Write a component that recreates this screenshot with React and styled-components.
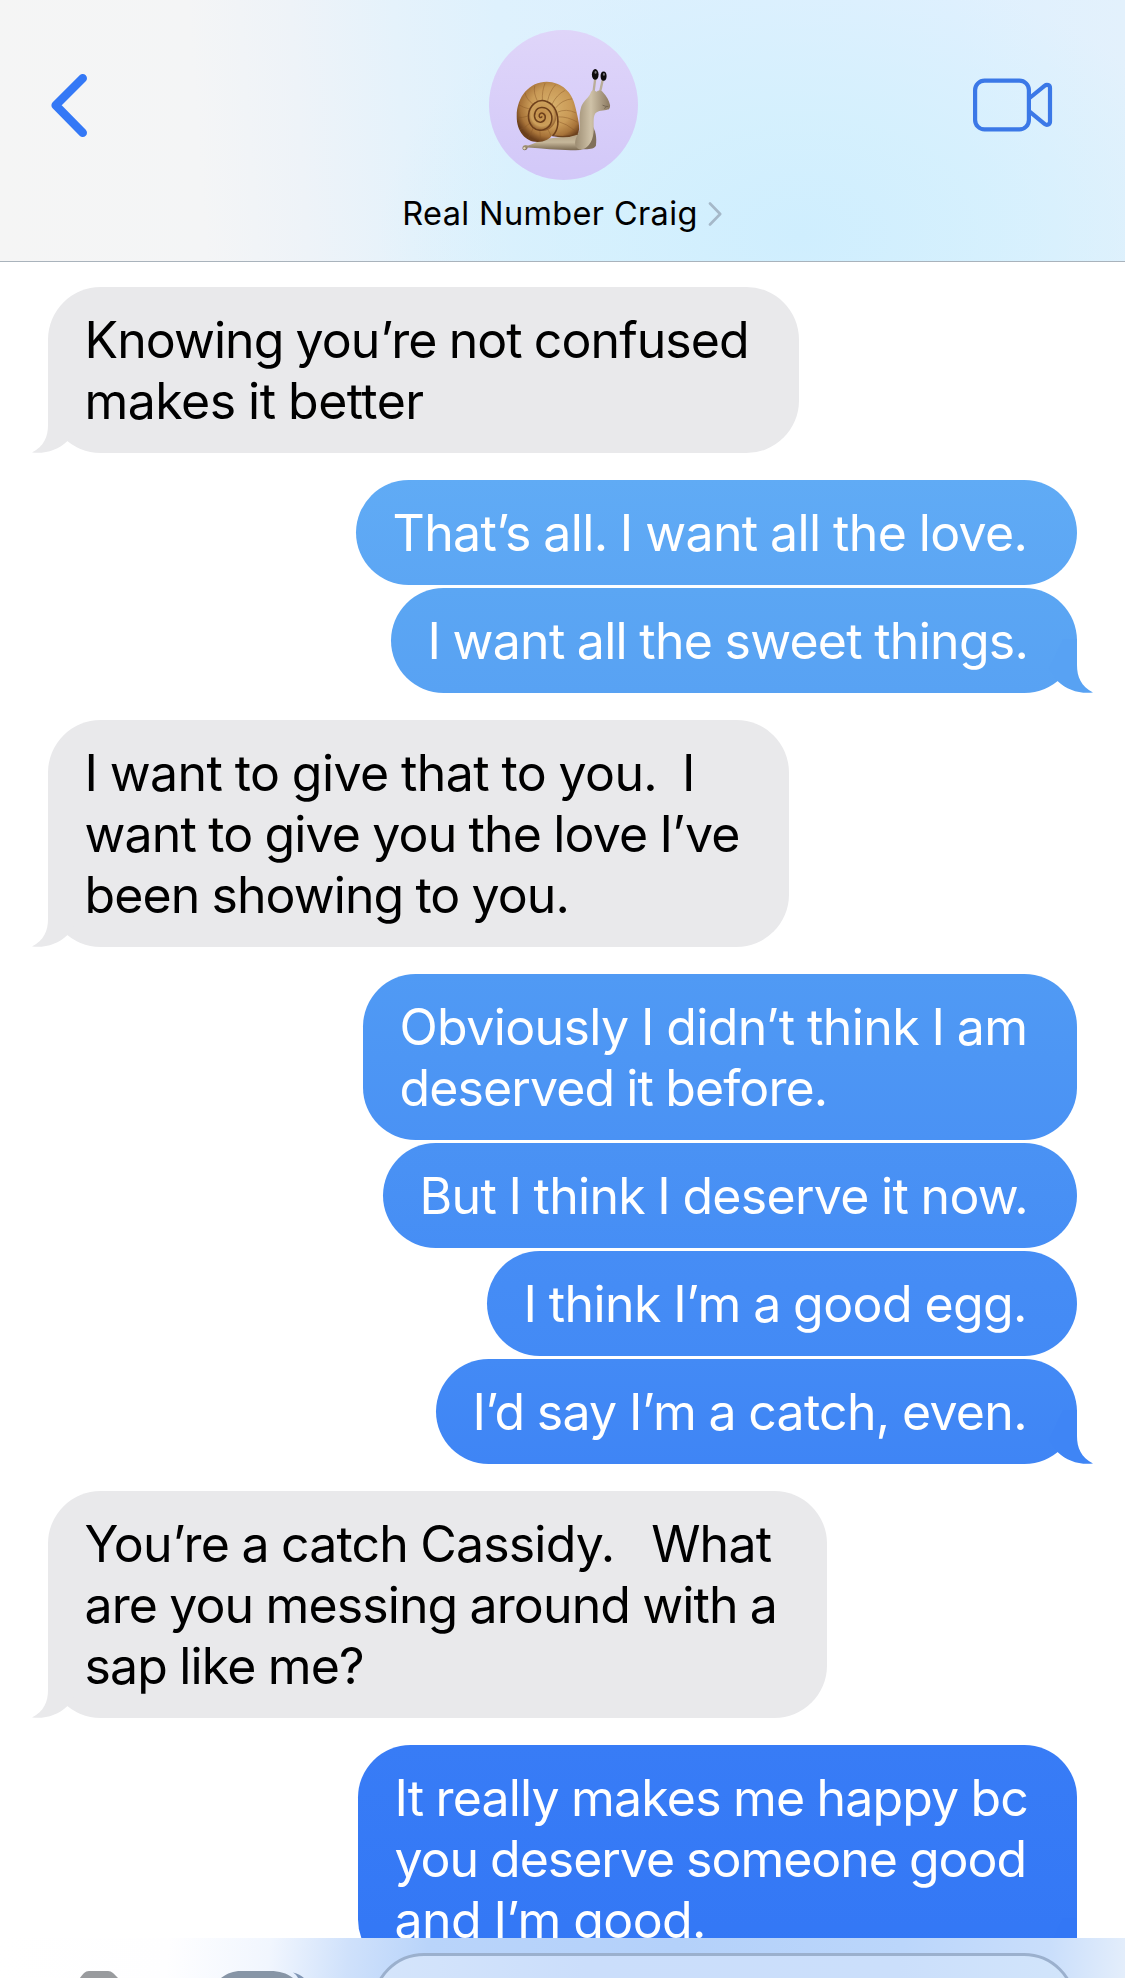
import React from "react";
import styled, { createGlobalStyle } from "styled-components";

// each line is [text, letter spacing in px]
const messages = [
	{
		side: "in",
		width: 751,
		lines: [["Knowing you’re not confused", -0.93], ["makes it better", -0.53]],
		last: true,
	},
	{
		side: "out",
		width: 721,
		lines: [["That’s all. I want all the love.", -0.61]],
		from: "#60abf5",
		to: "#5ca6f4",
	},
	{
		side: "out",
		width: 686,
		lines: [["I want all the sweet things.", -0.73]],
		from: "#5ba6f3",
		to: "#58a2f3",
		last: true,
	},
	{
		side: "in",
		width: 741,
		lines: [
			["I want to give that to you.  I", -0.6],
			["want to give you the love I’ve", -0.86],
			["been showing to you.", -0.92],
		],
		last: true,
	},
	{
		side: "out",
		width: 714,
		lines: [["Obviously I didn’t think I am", -0.61], ["deserved it before.", -0.89]],
		from: "#509af4",
		to: "#4a92f4",
	},
	{
		side: "out",
		width: 694,
		lines: [["But I think I deserve it now.", -0.7]],
		from: "#4a92f4",
		to: "#468ef5",
	},
	{
		side: "out",
		width: 590,
		lines: [["I think I’m a good egg.", -0.6]],
		from: "#468df5",
		to: "#438af5",
	},
	{
		side: "out",
		width: 641,
		lines: [["I’d say I’m a catch, even.", -0.69]],
		from: "#438af5",
		to: "#3f85f5",
		last: true,
	},
	{
		side: "in",
		width: 779,
		lines: [
			["You’re a catch Cassidy.   What", -0.81],
			["are you messing around with a", -0.88],
			["sap like me?", -0.85],
		],
		last: true,
	},
	{
		side: "out",
		width: 719,
		lines: [
			["It really makes me happy bc", -0.83],
			["you deserve someone good", -1.03],
			["and I’m good.", -0.6],
		],
		from: "#387cf6",
		to: "#3377f5",
		last: true,
	},
];

function Snail() {
	return (
		<svg width="150" height="150" viewBox="26 30 449 449">
			<defs>
				<radialGradient id="shell" cx="0.55" cy="0.42" r="0.6">
					<stop offset="0" stopColor="#d9b26e" />
					<stop offset="0.55" stopColor="#c99a57" />
					<stop offset="0.82" stopColor="#a8743a" />
					<stop offset="1" stopColor="#6b3f1c" />
				</radialGradient>
				<radialGradient id="coil" cx="0.5" cy="0.45" r="0.55">
					<stop offset="0" stopColor="#c08c48" />
					<stop offset="0.7" stopColor="#cc9f5b" />
					<stop offset="1" stopColor="#8e5a2a" />
				</radialGradient>
				<linearGradient id="neck" x1="0" y1="0" x2="1" y2="0">
					<stop offset="0" stopColor="#9c8c72" />
					<stop offset="0.45" stopColor="#cfc2a8" />
					<stop offset="1" stopColor="#8a785f" />
				</linearGradient>
				<linearGradient id="foot" x1="0" y1="0" x2="0" y2="1">
					<stop offset="0" stopColor="#a89779" />
					<stop offset="0.6" stopColor="#c6b79a" />
					<stop offset="1" stopColor="#796850" />
				</linearGradient>
			</defs>

			{/* eye stalks */}
			<path d="M338 222 L345 168 M357 222 L368 172" stroke="#b9ad99" strokeWidth="7" fill="none" />
			<ellipse cx="344" cy="163" rx="10" ry="16" fill="#0d0b0d" />
			<ellipse cx="369" cy="168" rx="9" ry="14" fill="#0d0b0d" />
			<ellipse cx="345" cy="157" rx="3" ry="4" fill="#77757a" />
			<ellipse cx="370" cy="163" rx="3" ry="4" fill="#77757a" />

			{/* foot and neck */}
			<path
				d="M331 310 C346 330 349 352 346 376 C343 386 325 388 305 387 L290 370 Z"
				fill="#80705b"
			/>
			<path
				d="M126 384 C126 374 136 373 143 376 C158 372 172 364 184 358 L280 345 L302 330 L330 345 C326 370 315 386 299 389 C250 392 195 386 142 382 C141 391 127 393 126 384 Z"
				fill="url(#foot)"
			/>
			<path
				d="M294 340 C302 318 292 292 302 260 C308 242 326 232 331 216 C336 207 342 211 348 215 C353 210 361 210 367 216 C378 228 386 242 388 254 C390 260 386 270 381 268 C370 272 352 270 344 280 C336 292 341 317 339 337 C336 370 317 389 297 388 C280 382 280 360 294 340 Z"
				fill="url(#neck)"
			/>
			<path d="M366 255 Q376 260 383 259 M371 265 L377 261" stroke="#6f604e" strokeWidth="2.5" fill="none" />
			<circle cx="132" cy="384" r="3.5" fill="#e1d5bd" />

			{/* shell */}
			<path
				d="M216 344 C240 350 270 353 292 340 C301 326 292 292 285 263 C276 215 243 186 199 185 C148 185 109 229 109 288 C108 334 137 366 172 365 C192 364 207 357 216 344 Z"
				fill="url(#shell)"
			/>
			<g stroke="#875625" strokeWidth="2" opacity="0.65" fill="none">
				<path d="M231 303 Q257 310 285 332" />
				<path d="M233 290 Q262 289 291 306" />
				<path d="M231 276 Q257 264 286 278" />
				<path d="M226 263 Q244 239 275 236" />
				<path d="M215 252 Q228 224 253 211" />
				<path d="M201 244 Q207 213 226 193" />
				<path d="M186 241 Q184 212 194 189" />
				<path d="M171 243 Q158 216 163 197" />
				<path d="M158 252 Q137 237 134 218" />
				<path d="M149 267 Q127 262 116 254" />
				<path d="M145 287 Q125 294 111 292" />
				<path d="M149 308 Q134 323 119 328" />
				<path d="M159 322 Q151 342 144 352" />
				<path d="M178 329 Q180 347 179 362" />
				<path d="M199 324 Q209 337 211 346" />
			</g>
			<ellipse cx="185" cy="286" rx="43" ry="46" fill="url(#coil)" />
			<path
				d="M217 346 C234 330 237 298 226 271 C215 245 185 232 163 249 C140 267 138 302 157 321 C176 339 207 328 213 304 C219 279 202 261 183 262 C165 263 158 284 165 298 C173 310 190 308 194 295 C197 281 183 274 177 283 C174 290 180 295 184 290"
				fill="none"
				stroke="#6d3f1b"
				strokeWidth="4.5"
				strokeLinecap="round"
			/>
			<path d="M217 346 Q258 354 292 341" fill="none" stroke="#6d431f" strokeWidth="4" />
		</svg>
	);
}

function Tail({ side, color }) {
	return (
		<TailShape $side={side} viewBox="0 0 44 54">
			<path
				d="M16 0 V26 C16 38 12 47 0 53.6 C14 55 26 51 35.5 42 L44 30 L30 0 Z"
				fill={color}
			/>
		</TailShape>
	);
}

function Message({ side, width, lines, from, to, last }) {
	return (
		<Bubble $side={side} $width={width} $from={from} $to={to} $last={last}>
			{last && <Tail side={side} color={side === "in" ? "#e9e9eb" : to} />}
			{lines.map(([text, tracking]) => (
				<Line key={text} $tracking={tracking}>
					{text}
				</Line>
			))}
		</Bubble>
	);
}

function App() {
	return (
		<Screen>
			<GlobalStyle />

			<Header>
				<BackButton aria-label="Back">
					<svg width="40" height="66" viewBox="0 0 40 66">
						<path
							d="M34.7 6.3 L7.7 33.3 L34.7 60.7"
							fill="none"
							stroke="#3478f6"
							strokeWidth="8.6"
							strokeLinecap="round"
							strokeLinejoin="round"
						/>
					</svg>
				</BackButton>

				<Contact>
					<Avatar>
						<Snail />
					</Avatar>
					<ContactName>
						<span>Real Number Craig</span>
						<svg width="14" height="26" viewBox="0 0 14 26">
							<path
								d="M2 2.5 L12.2 13 L2 23.5"
								fill="none"
								stroke="#a5b8c8"
								strokeWidth="2.6"
								strokeLinecap="round"
								strokeLinejoin="round"
							/>
						</svg>
					</ContactName>
				</Contact>

				<VideoButton aria-label="Video call">
					<svg width="80" height="54" viewBox="0 0 80 54">
						<g fill="none" stroke="#3b78e7" strokeWidth="4.2" strokeLinejoin="round">
							<rect x="2.1" y="2.6" width="53.8" height="48.8" rx="9.5" />
							<path d="M56 20.5 L71.5 7.8 C74 5.9 77 7 77 10 V43.5 C77 46.5 74 47.8 71.5 45.8 L56 33.2" />
						</g>
					</svg>
				</VideoButton>
			</Header>

			<Thread>
				{messages.map((message) => (
					<Message key={message.lines[0][0]} {...message} />
				))}
			</Thread>

			<Composer>
				<CameraIcon width="40" height="7" viewBox="0 0 40 7">
					<path d="M1 7 C4 3 6 0 10 0 H29 C33 0 35 3 39 7 Z" fill="#999b9e" />
				</CameraIcon>
				<AppsIcon width="86" height="7" viewBox="0 0 86 7">
					<path d="M1 7 C8 2 13 0 21 0 H50 C60 0 66 2 73 7 Z" fill="#8795a6" />
					<path d="M73 1.5 C78 2.5 81 4.5 84 7 H78 C77 5 75.5 3 73 1.5 Z" fill="#7f94b3" />
				</AppsIcon>
				<Field />
			</Composer>
		</Screen>
	);
}

export default App;

const GlobalStyle = createGlobalStyle`
	* {
		box-sizing: border-box;
	}

	body {
		margin: 0;
		background: #ffffff;
		overflow: hidden;
	}
`;

const Screen = styled.div`
	width: 1125px;
	height: 1978px;
	overflow: hidden;

	display: grid;
	grid-template-rows: 262px 1676px 40px;

	background: #ffffff;
	color: #000000;
	font-family: Inter, "Liberation Sans", sans-serif;
`;

const Header = styled.header`
	display: grid;
	grid-template-columns: 150px 1fr 150px;
	align-items: start;

	border-bottom: 1px solid #a9b3bc;
	background: radial-gradient(
			ellipse 420px 270px at 800px 235px,
			#cfeefe 0%,
			rgba(210, 240, 253, 0.75) 45%,
			rgba(218, 240, 254, 0) 100%
		),
		linear-gradient(
			86deg,
			#f5f5f5 0%,
			#f4f5f6 18%,
			#eef3f8 27%,
			#e5f2fb 36%,
			#def1fd 45%,
			#dcf0fe 60%,
			#dff0fe 85%,
			#e3f1fc 100%
		);
`;

const IconButton = styled.button`
	display: flex;
	padding: 0;
	border: 0;
	background: none;
`;

const BackButton = styled(IconButton)`
	margin: 72px 0 0 47.5px;
`;

const VideoButton = styled(IconButton)`
	margin: 77.5px 0 0 -2px;
`;

const Contact = styled.div`
	display: flex;
	flex-direction: column;
	align-items: center;
	padding-top: 30px;
`;

const Avatar = styled.div`
	width: 149px;
	height: 150px;
	margin-left: 1px;
	border-radius: 50%;
	overflow: hidden;
	background: linear-gradient(#dfd5f9, #d2c8f8);
`;

const ContactName = styled.div`
	display: flex;
	align-items: center;
	gap: 10px;
	height: 40px;
	margin: 14px 1px 0 0;

	font-size: 32.5px;
	line-height: 40px;
	letter-spacing: 0.35px;
	white-space: nowrap;
`;

const Thread = styled.main`
	display: flex;
	flex-direction: column;
	padding: 25px 48px 0 48px;
	overflow: hidden;
`;

const Bubble = styled.div`
	position: relative;
	flex: none;
	align-self: ${({ $side }) => ($side === "in" ? "flex-start" : "flex-end")};
	width: ${({ $width }) => $width}px;
	margin-bottom: ${({ $last }) => ($last ? 27 : 3)}px;
	padding: 23px 0 21px 36.5px;
	border-radius: 52.5px;

	background: ${({ $side, $from, $to }) =>
		$side === "in" ? "#e9e9eb" : `linear-gradient(${$from}, ${$to})`};
	color: ${({ $side }) => ($side === "in" ? "#000000" : "#ffffff")};
`;

const Line = styled.div`
	font-size: 50px;
	line-height: 61px;
	letter-spacing: ${({ $tracking }) => $tracking}px;
	word-spacing: -1px;
	white-space: pre;
`;

const TailShape = styled.svg`
	position: absolute;
	bottom: 0;
	width: 44px;
	height: 54px;
	${({ $side }) =>
		$side === "in" ? "left: -16px;" : "right: -16px; transform: scaleX(-1);"}
`;

const Composer = styled.footer`
	display: flex;
	overflow: hidden;
	background: linear-gradient(
		96deg,
		#ffffff 0%,
		#fefeff 15%,
		#f1f6fe 24%,
		#cfe1fb 31%,
		#b9d4fa 38%,
		#b4d1fa 60%,
		#bbd6fb 80%,
		#c9defb 93%,
		#e4eefb 100%
	);
`;

const CameraIcon = styled.svg`
	margin: 33px 0 0 79px;
`;

const AppsIcon = styled.svg`
	margin: 33px 0 0 101px;
`;

const Field = styled.div`
	flex: none;
	width: 704px;
	height: 105px;
	margin: 15px 0 0 66px;
	border: 3px solid #9bb0cd;
	border-radius: 52px;
	background: linear-gradient(90deg, #d5e5fb, #cbdefb 30%, #cbdffb 75%, #d2e5fb);
`;
